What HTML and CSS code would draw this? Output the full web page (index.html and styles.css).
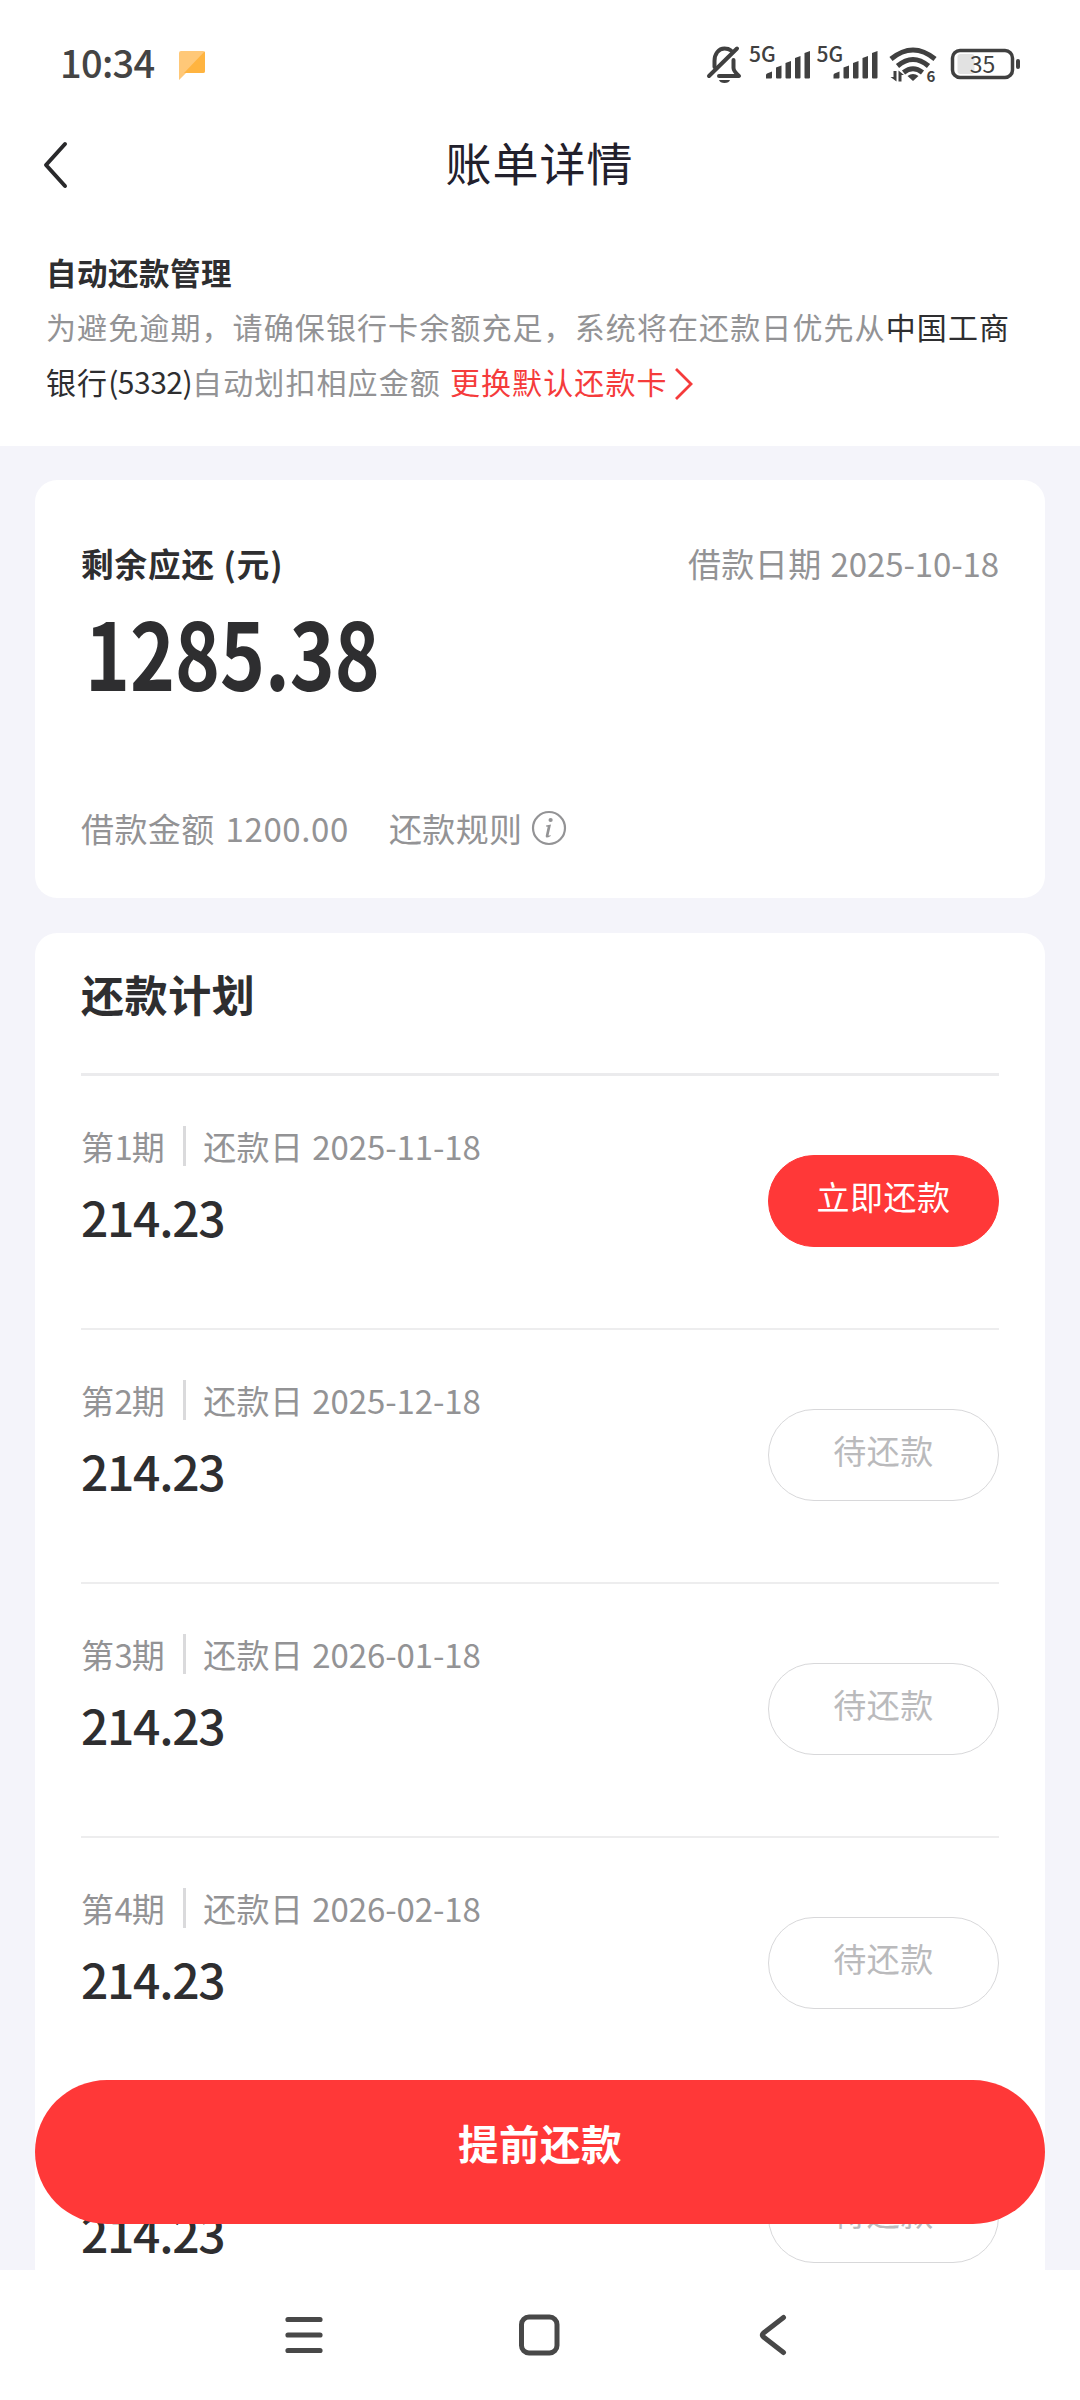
FILE: index.html
```html
<!DOCTYPE html>
<html lang="zh-CN">
<head>
<meta charset="utf-8">
<title>账单详情</title>
<link rel="stylesheet" href="styles.css">
</head>
<body>
<div class="screen">
  <header class="status">
    <span class="clock">10:34</span>
    <svg class="bubble" width="26" height="29" viewBox="0 0 26 29"><path d="M2 0H24a2 2 0 0 1 2 2V20a2 2 0 0 1-2 2H7L0 29V2a2 2 0 0 1 2-2z" fill="#ffc878"/><path d="M25.500.5Q26 1 26 2V20a2 2 0 0 1-2 2H5z" fill="#ffb440"/></svg>
    <svg class="indicators" width="320" height="64" viewBox="704 32 320 64" fill="#404040">
      <g fill="none" stroke="#404040" stroke-width="4" stroke-linejoin="round" stroke-linecap="round">
        <path d="M714.500 67V61c0-7 4-12.500 10-12.500q4 0 6.500 2"/><path d="M733.500 60V68q0 3 5.500 8H719"/><path d="M709 76L737 48.500"/>
      </g>
      <path d="M719 80H730q-1 3-5.500 3T719 80z"/>
      <text class="net" x="749" y="62">5G</text><text class="net" x="816.500" y="62">5G</text>
      <g id="bars"><path d="M766 78.500V75q0-1 1-1.500L772 71.500V77.500q0 1-1 1zM776 67.500L781.500 65.500V77.500q0 1-1 1H777q-1 0-1-1zM785.500 63L791 61V77.500q0 1-1 1H786.500q-1 0-1-1zM795 58L800.500 56V77.500q0 1-1 1H796q-1 0-1-1zM804.500 53L810 51V77.500q0 1-1 1H805.500q-1 0-1-1z"/></g>
      <use href="#bars" x="67.500"/>
      <g fill="none" stroke="#404040" stroke-width="5"><path d="M891 59Q913 41 935 59"/><path d="M897.500 66Q913 53 928.500 66"/><path d="M903.500 72.500Q913 65 922.500 72.500"/></g>
      <path d="M907.500 76q5.500-4 11 0L913 81z"/>
      <path d="M890.500 77h3v-6h3v10.500zM898.500 81.500V70.500l5.500 4.500h-2.500v6.500z"/>
      <text class="six" x="926.500" y="81.500">6</text>
      <rect x="952.500" y="50.500" width="60" height="27" rx="7.500" fill="none" stroke="#404040" stroke-width="3.500"/>
      <rect x="957.500" y="54" width="17" height="20" rx="3" fill="#e2e2e2"/>
      <rect x="1016" y="59" width="4" height="10" rx="2"/>
      <text class="level" x="982.500" y="73" text-anchor="middle">35</text>
    </svg>
  </header>

  <nav class="titlebar">
    <svg width="28" height="48" viewBox="0 0 28 48"><path d="M23 3L4 24 23 45" fill="none" stroke="#29292b" stroke-width="4" stroke-linecap="round" stroke-linejoin="round"/></svg>
    <h1>账单详情</h1>
  </nav>

  <section class="notice">
    <h2>自动还款管理</h2>
    <p>为避免逾期，请确保银行卡余额充足，系统将在还款日优先从<b>中国工商<br>银行<span class="num">(5332)</span></b>自动划扣相应金额<a class="change">更换默认还款卡<svg width="20" height="34" viewBox="0 0 20 34"><path d="M2 2L17 17 2 32" fill="none" stroke="#f53b3b" stroke-width="2.800"/></svg></a></p>
  </section>

  <main class="content">
    <section class="card summary">
      <div class="summary-top">
        <h3>剩余应还 (元)</h3>
        <div class="meta"><span>借款日期</span><span class="num">2025-10-18</span></div>
      </div>
      <div class="total">1285.38</div>
      <div class="summary-bottom">
        <div class="meta"><span>借款金额</span><span class="num loan">1200.00</span></div>
        <div class="meta rules"><span>还款规则</span><svg width="36" height="36" viewBox="0 0 36 36" fill="#939395"><circle cx="18" cy="18" r="16" fill="none" stroke="#939395" stroke-width="2.200"/><circle cx="19.600" cy="10" r="2.100"/><path d="M15 15.500L20 14.500 17.600 25q-.2 1.300 1.800 0l.3.900q-5 3.300-5 .2L16.700 16.700 15 16.400z"/></svg></div>
      </div>
    </section>

    <section class="card plan">
      <h2>还款计划</h2>
      <ul>
        <li><div><div class="meta"><span>第<i>1</i>期</span><span class="bar"></span><span>还款日</span><span class="num">2025-11-18</span></div><div class="amount">214.23</div></div><span class="btn pay">立即还款</span></li>
        <li><div><div class="meta"><span>第<i>2</i>期</span><span class="bar"></span><span>还款日</span><span class="num">2025-12-18</span></div><div class="amount">214.23</div></div><span class="btn">待还款</span></li>
        <li><div><div class="meta"><span>第<i>3</i>期</span><span class="bar"></span><span>还款日</span><span class="num">2026-01-18</span></div><div class="amount">214.23</div></div><span class="btn">待还款</span></li>
        <li><div><div class="meta"><span>第<i>4</i>期</span><span class="bar"></span><span>还款日</span><span class="num">2026-02-18</span></div><div class="amount">214.23</div></div><span class="btn">待还款</span></li>
        <li><div><div class="meta covered"></div><div class="amount">214.23</div></div><span class="btn">待还款</span></li>
      </ul>
    </section>
    <div class="prepay">提前还款</div>
  </main>

  <footer class="navbar">
    <svg width="44" height="44" viewBox="0 0 44 44"><path d="M6 6.500H38M6 22H38M6 37.500H38" stroke="#484848" stroke-width="5.200" stroke-linecap="round"/></svg>
    <svg width="44" height="44" viewBox="0 0 44 44"><rect x="4.500" y="4" width="35.500" height="36" rx="7.500" fill="none" stroke="#484848" stroke-width="5"/></svg>
    <svg width="44" height="44" viewBox="0 0 44 44"><path d="M31.500 4.500L11.500 20q-2.500 2 0 4L31.500 39.500" fill="none" stroke="#484848" stroke-width="5" stroke-linecap="round" stroke-linejoin="round"/></svg>
  </footer>
</div>
</body>
</html>
```
FILE: styles.css
```css
* { box-sizing: border-box; margin: 0; padding: 0; }
body {
  font-family: "Noto Sans CJK SC", "Noto Sans", sans-serif;
  color: #2e2e30;
  background: #fff;
}
svg { display: block; flex: none; }
.screen {
  width: 1080px;
  height: 2400px;
  overflow: hidden;
  display: flex;
  flex-direction: column;
}

/* system status bar */
.status {
  height: 120px;
  padding: 6px 56px 0 60px;
  display: flex;
  align-items: center;
}
.clock { font-size: 38px; font-weight: 500; color: #444; line-height: 50px; width: 119px; margin-top: -2px; letter-spacing: -.7px; }
.bubble { margin-top: 4px; }
.indicators { margin-left: auto; margin-top: 2px; }
.net { font: 500 21px "Noto Sans CJK SC", sans-serif; }
.six { font: 700 15px "Noto Sans CJK SC", sans-serif; }
.level { font: 400 23px "Noto Sans CJK SC", sans-serif; }

.titlebar {
  height: 90px;
  padding: 0 43px 0 42px;
  display: grid;
  grid-template-columns: 28px 1fr 28px;
  align-items: center;
}
.titlebar h1 {
  font-size: 46px;
  font-weight: 400;
  letter-spacing: 1px;
  line-height: 60px;
  color: #22202c;
  text-align: center;
  margin-top: -8px;
}

.notice { height: 236px; padding: 35px 46px 0; }
.notice h2 { font-size: 30.500px; font-weight: 700; letter-spacing: .5px; line-height: 55px; }
.notice p { font-size: 30px; letter-spacing: 1.100px; line-height: 55px; color: #939395; white-space: nowrap; margin-top: -1px; }
.notice b { font-weight: 400; color: #2e2e30; }
.notice .num { letter-spacing: -.5px; }
.change { color: #f53b3b; margin-left: 9px; }
.change svg { display: inline-block; vertical-align: -7px; margin-left: 6px; }

.content {
  position: relative;
  height: 1824px;
  overflow: hidden;
  padding: 34px 35px 0;
  background: #f4f4fa;
  display: flex;
  flex-direction: column;
  gap: 35px;
}
.card { background: #fff; border-radius: 22px; padding: 0 46px; flex: none; }

.meta {
  display: flex;
  align-items: center;
  font-size: 33px;
  letter-spacing: .4px;
  line-height: 48px;
  color: #939395;
}
.meta .num { margin-left: 9px; letter-spacing: -.1px; }
.meta .loan { margin-left: 11px; letter-spacing: .6px; }
.meta i { font-style: normal; letter-spacing: -1px; }
.covered { height: 48px; }

.summary { height: 418px; padding-top: 59px; }
.summary-top { display: flex; justify-content: space-between; }
.summary h3 { font-size: 32.500px; font-weight: 700; letter-spacing: 1px; line-height: 48px; }
.total {
  font-size: 93px;
  font-weight: 700;
  line-height: 110px;
  margin: 9px 0 0 4px;
  width: max-content;
  transform: scaleX(.82);
  transform-origin: left;
}
.summary-bottom { display: flex; gap: 40px; margin-top: 98px; }
.rules svg { margin-left: 9px; }

.plan { height: 1500px; }
.plan h2 {
  height: 143px;
  border-bottom: 3px solid #ebebed;
  padding-top: 30px;
  font-size: 43px;
  font-weight: 700;
  letter-spacing: .6px;
  line-height: 60px;
}
.plan ul { list-style: none; }
.plan li {
  height: 254px;
  padding-top: 46px;
  border-bottom: 2px solid #ededee;
  display: flex;
  justify-content: space-between;
}
.bar { width: 3px; height: 40px; background: #dadadc; margin: 0 17px 0 18px; }
.amount { font-size: 48px; font-weight: 500; line-height: 60px; margin-top: 16px; letter-spacing: -1.300px; }
.btn {
  width: 231px;
  height: 92px;
  margin-top: 33px;
  border: 1.500px solid #d8d8da;
  border-radius: 46px;
  font-size: 33px;
  letter-spacing: .5px;
  line-height: 80px;
  text-align: center;
  color: #bababc;
}
.pay { background: #ff3838; border-color: #ff3838; color: #fff; }

/* floats over the scrolling plan */
.prepay {
  position: absolute;
  left: 35px;
  right: 35px;
  bottom: 46px;
  height: 144px;
  border-radius: 72px;
  background: #ff3838;
  color: #fff;
  font-size: 40.500px;
  font-weight: 700;
  letter-spacing: .5px;
  line-height: 126px;
  text-align: center;
}

.navbar {
  height: 130px;
  padding: 0 284px 0 282px;
  display: flex;
  align-items: center;
  justify-content: space-between;
}
```
